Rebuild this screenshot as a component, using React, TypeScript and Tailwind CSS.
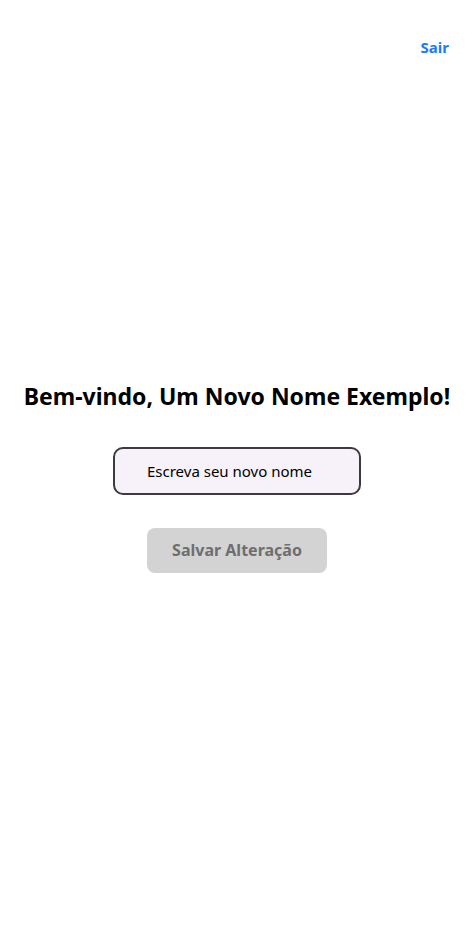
import { useState } from "react";

export default function App() {
  const [name, setName] = useState("");

  return (
    <div className="flex h-[952px] w-full flex-col bg-white font-['Noto_Sans',sans-serif] text-black">
      <header className="flex justify-end px-[25px] pt-[36px]">
        <button className="text-[15px] font-bold text-[#1b7cf4]">Sair</button>
      </header>

      <main className="mt-[322px] flex flex-col items-center">
        <h1 className="text-[23px] font-bold leading-[30px]">Bem-vindo, Um Novo Nome Exemplo!</h1>

        <input
          value={name}
          onChange={(e) => setName(e.target.value)}
          placeholder="Escreva seu novo nome"
          className="mt-[36px] h-[48px] w-[248px] rounded-[10px] border-2 border-[#3a3a40] bg-[#f7f2f9] px-[32px] text-[15px] text-black outline-none placeholder:text-black"
        />

        <button
          disabled={!name}
          className="mt-[33px] h-[45px] w-[180px] rounded-[8px] bg-[#d3d3d3] text-[16px] font-bold text-[#6e6e6e]"
        >
          Salvar Alteração
        </button>
      </main>
    </div>
  );
}
